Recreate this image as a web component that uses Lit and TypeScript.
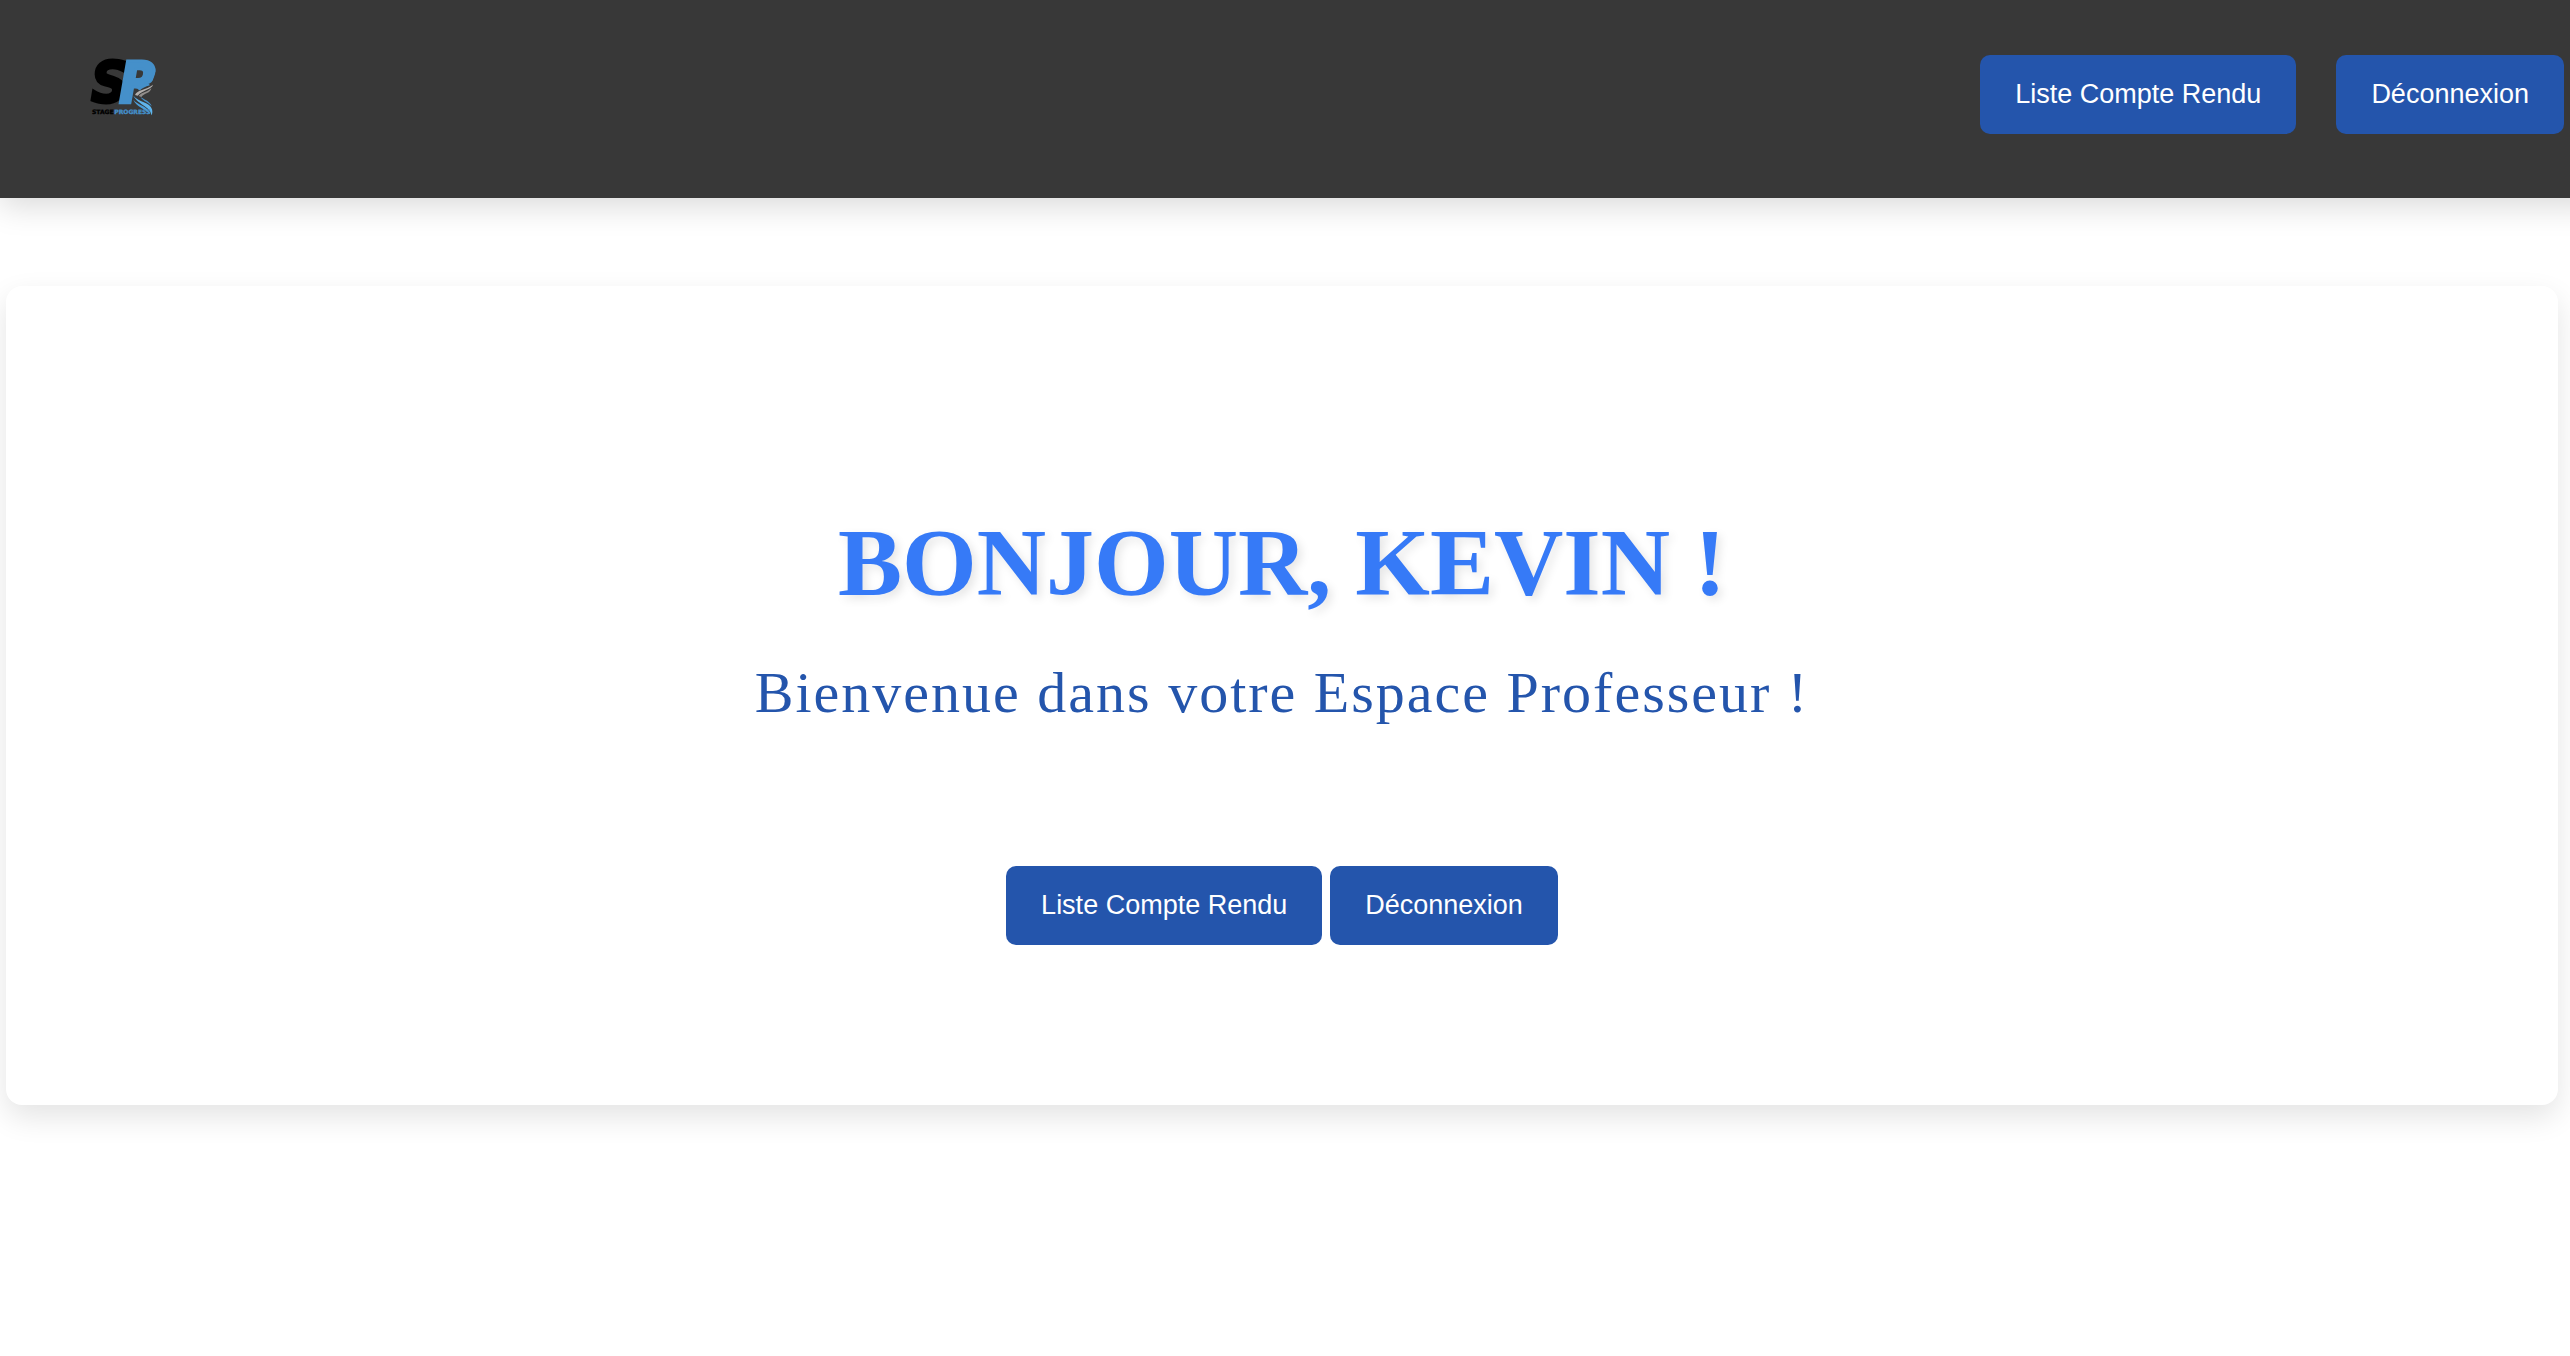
import { LitElement, html, css } from "lit";
import { customElement, property } from "lit/decorators.js";

@customElement("brand-logo")
export class BrandLogo extends LitElement {
  static styles = css`
    :host {
      display: block;
    }
    .mark {
      display: block;
      width: 90px;
      height: 70px;
      overflow: visible;
    }
    .initial {
      font: italic 700 170px "Liberation Sans Narrow", "DejaVu Sans Condensed", sans-serif;
      stroke-width: 9px;
      stroke-linejoin: miter;
    }
    .name {
      font: 700 18px "DejaVu Sans", sans-serif;
    }
    .ink {
      fill: #000;
      stroke: #000;
    }
    .sky {
      fill: #4590ca;
      stroke: #4590ca;
    }
    .name.ink,
    .name.sky {
      stroke-width: 1px;
    }
  `;

  render() {
    return html`
      <svg class="mark" viewBox="0 15 270 210" role="img" aria-label="Stage Progress">
        <defs>
          <clipPath id="bowl">
            <path d="M90 0 H250 L214 104 Q185 112 163 132 L152 175 H90 Z" />
          </clipPath>
        </defs>
        <text class="initial ink" x="34" y="158">S</text>
        <g clip-path="url(#bowl)">
          <text class="initial sky" x="118" y="158">R</text>
        </g>
        <path d="M165 135 C171 118 198 121 219 104 C217 117 187 120 173 137 Z" fill="#b3afad" />
        <path d="M176 138 C184 125 206 126 214 113 C213 130 191 129 184 141 Z" fill="#928e8c" />
        <path d="M160 137 C174 156 211 156 216 178 C218 186 217 192 214 196 C214 170 176 166 160 137 Z" fill="#5fb4ec" />
        <path d="M160 149 C174 167 205 167 210 192 C194 175 169 171 160 149 Z" fill="#4a9edb" />
        <path d="M182 142 C194 149 211 155 215 169 C205 158 190 154 182 142 Z" fill="#4590ca" />
        <text class="name ink" x="36" y="193">STAGE</text>
        <text class="name sky" x="103" y="193">PROGRESS</text>
      </svg>
    `;
  }
}

@customElement("action-button")
export class ActionButton extends LitElement {
  @property() label = "";

  static styles = css`
    :host {
      display: block;
    }
    .button {
      display: block;
      margin: 0;
      padding: 24px 35px;
      border: 0;
      border-radius: 10px;
      background: #2455ac;
      color: #fff;
      font: 400 27px/31px "Liberation Sans", Arial, sans-serif;
      white-space: nowrap;
      cursor: pointer;
    }
    .button:hover {
      background: #1c468f;
    }
  `;

  render() {
    return html`<button class="button" type="button">${this.label}</button>`;
  }
}

@customElement("app-root")
export class AppRoot extends LitElement {
  private actions = ["Liste Compte Rendu", "Déconnexion"];

  static styles = css`
    :host {
      display: block;
      min-height: 100vh;
      overflow: hidden;
      background: #fff;
      font-family: "Liberation Serif", "Times New Roman", serif;
    }
    .header {
      display: flex;
      justify-content: space-between;
      align-items: flex-start;
      margin-right: -30px;
      padding: 55px 36px 64px 80px;
      background: #383838;
      box-shadow: 0 8px 30px rgba(0, 0, 0, 0.15);
    }
    .nav {
      display: flex;
      gap: 40px;
    }
    .card {
      display: flex;
      flex-direction: column;
      align-items: center;
      margin: 88px 12px 0 6px;
      padding: 222px 32px 160px;
      border-radius: 16px;
      background: #fff;
      box-shadow: 0 12px 30px rgba(0, 0, 0, 0.11);
      text-align: center;
    }
    .title {
      margin: 0;
      color: #367af7;
      font-size: 96px;
      font-weight: 700;
      line-height: 110px;
      text-transform: uppercase;
      text-shadow: 4px 4px 10px rgba(0, 0, 0, 0.1);
    }
    .subtitle {
      margin: 41px 0 140px;
      color: #2455ac;
      font-size: 58px;
      line-height: 67px;
      letter-spacing: 2px;
    }
    .actions {
      display: flex;
      flex-wrap: wrap;
      justify-content: center;
      gap: 8px;
    }
  `;

  render() {
    const buttons = this.actions.map((label) => html`<action-button label=${label}></action-button>`);
    return html`
      <header class="header">
        <brand-logo></brand-logo>
        <nav class="nav">${buttons}</nav>
      </header>
      <main class="card">
        <h1 class="title">Bonjour, Kevin !</h1>
        <p class="subtitle">Bienvenue dans votre Espace Professeur !</p>
        <div class="actions">${buttons}</div>
      </main>
    `;
  }
}
